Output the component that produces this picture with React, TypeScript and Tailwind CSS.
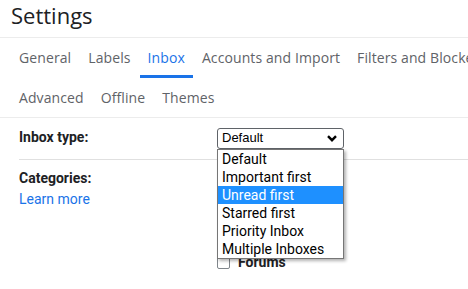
import { Fragment } from 'react';

const tabRows = [
  ['General', 'Labels', 'Inbox', 'Accounts and Import', 'Filters and Blocked Addresses'],
  ['Advanced', 'Offline', 'Themes'],
];

const inboxTypes = [
  'Default',
  'Important first',
  'Unread first',
  'Starred first',
  'Priority Inbox',
  'Multiple Inboxes',
];

const categories = ['Primary', 'Social', 'Promotions', 'Updates', 'Forums'];

const Chevron = () => (
  <svg width="10" height="7" viewBox="0 0 10 7" className="shrink-0 mr-[2px]">
    <path d="M1 1.2 L5 5.2 L9 1.2" fill="none" stroke="#000" strokeWidth="2.4" />
  </svg>
);

export default function App() {
  return (
    <div className="relative w-[468px] h-[289px] overflow-hidden bg-white font-['Roboto',sans-serif] text-[#202124]">
      {/* Header */}
      <div className="h-[38px] pl-[11px] flex items-center border-b border-[#ececec]">
        <h1 className="font-['Open_Sans',sans-serif] text-[22px] leading-none -mt-[8px] text-[#202124] whitespace-nowrap">
          Settings
        </h1>
      </div>

      {/* Tabs */}
      <div className="pl-[11px] border-b border-[#ececec]">
        {tabRows.map((row, i) => (
          <div key={i} className={`flex ${i === 0 ? 'h-[40px]' : 'h-[39px]'}`}>
            {row.map((tab) => (
              <div
                key={tab}
                className={`px-2 mr-px flex items-center whitespace-nowrap text-[14px] font-['Open_Sans',sans-serif] tracking-[0.1px] ${
                  i === 0 ? 'pb-[1px]' : ''
                } ${
                  tab === 'Inbox'
                    ? 'text-[#1a73e8] border-b-[3px] border-[#1a73e8] pt-[2px]'
                    : 'text-[#5f6368]'
                }`}
              >
                {tab}
              </div>
            ))}
          </div>
        ))}
      </div>

      {/* Inbox type */}
      <div className="ml-[19px] h-[42px] flex items-center border-b border-[#e0e0e0]">
        <div className="w-[198px] text-[14px] font-bold -mt-[2px]">Inbox type:</div>
        <div className="w-[127px] h-[21px] -mt-[1px] border border-[#5f6368] rounded-[3px] flex items-center justify-between pl-[4px] pr-[4px] font-['Liberation_Sans',sans-serif] text-[13px] text-black">
          <span>Default</span>
          <Chevron />
        </div>
      </div>

      {/* Categories */}
      <div className="ml-[19px] pt-[8px] flex">
        <div className="w-[198px] text-[14px]">
          <div className="h-[21px] flex items-center font-bold">Categories:</div>
          <div className="h-[21px] flex items-center text-[#1a73e8]">Learn more</div>
        </div>
        <div>
          {categories.map((c) => (
            <div key={c} className="h-[21px] flex items-center gap-[8px]">
              <div className="w-[13px] h-[13px] border border-[#80868b] rounded-[2px]" />
              <span className="text-[14px] font-bold">{c}</span>
            </div>
          ))}
        </div>
      </div>

      {/* Open listbox */}
      <div className="absolute left-[217px] top-[149px] w-[127px] border border-[#767676] bg-white shadow-[2px_2px_3px_rgba(0,0,0,0.3)] font-['Roboto',sans-serif] text-[14px]">
        {inboxTypes.map((t) => (
          <Fragment key={t}>
            <div
              className={`h-[18px] flex items-center pl-[4px] leading-none ${
                t === 'Unread first' ? 'bg-[#1e90ff] text-white' : 'text-black'
              }`}
            >
              {t}
            </div>
          </Fragment>
        ))}
      </div>
    </div>
  );
}
